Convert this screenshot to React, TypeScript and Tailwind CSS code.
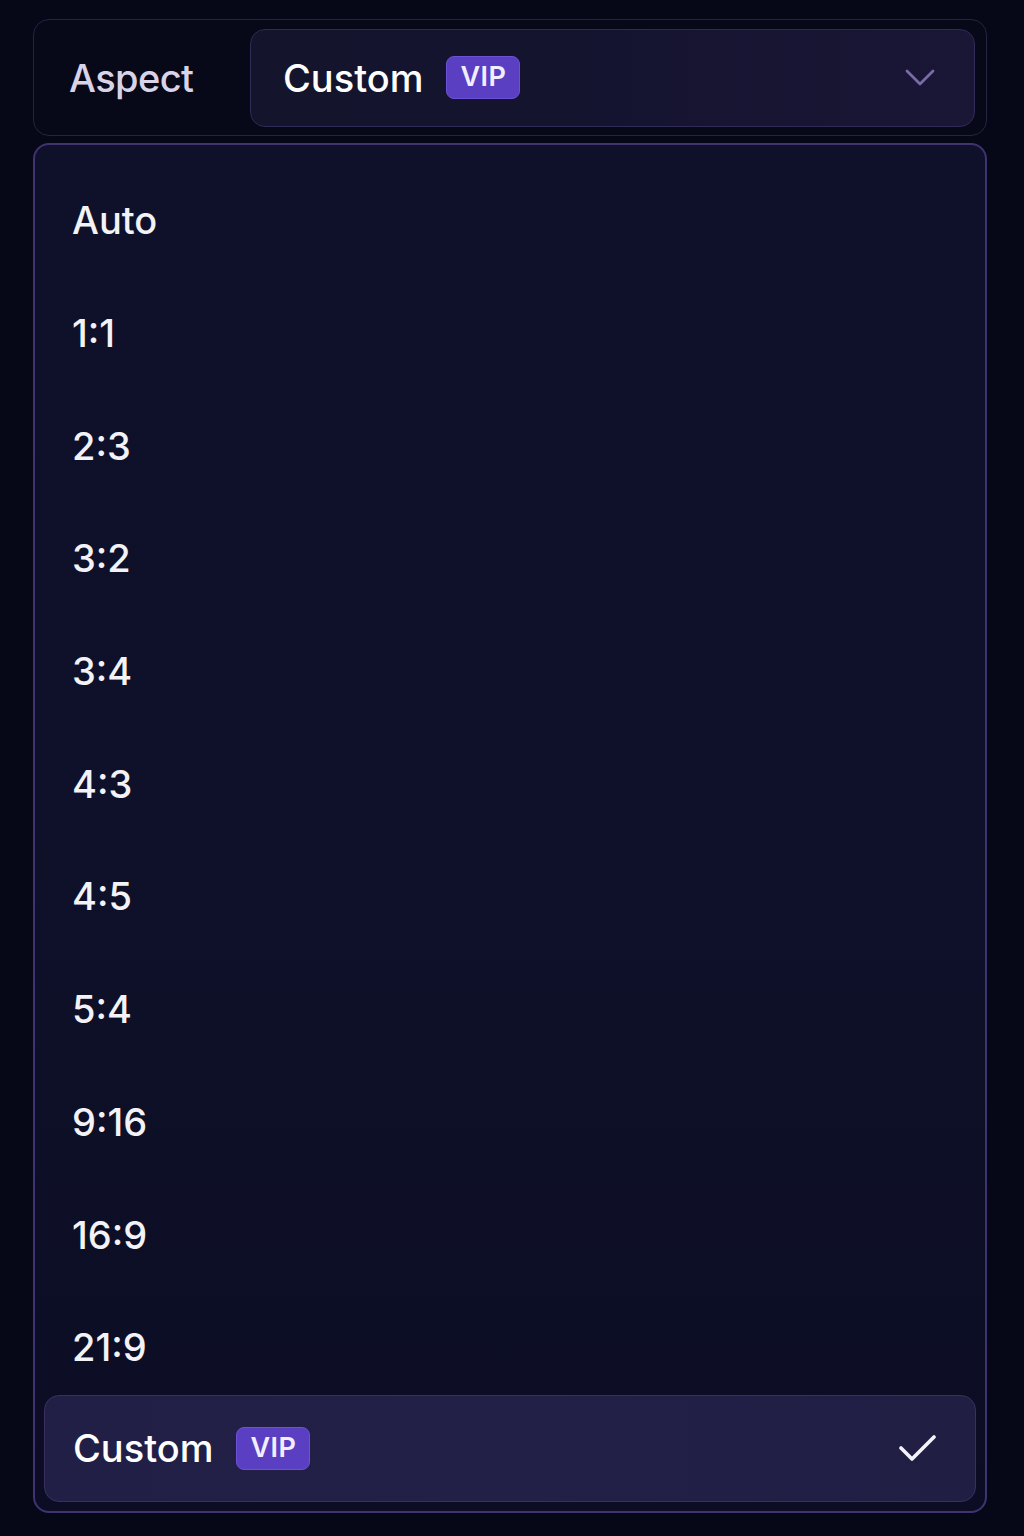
const options = ["Auto", "1:1", "2:3", "3:2", "3:4", "4:3", "4:5", "5:4", "9:16", "16:9", "21:9"];

function VipBadge() {
  return (
    <span className="flex h-[43px] w-[74px] items-center justify-center rounded-[8px] border border-[#6b52d6] bg-[#5a3fc2] text-[27px] font-semibold tracking-[0.5px] text-[#f1eeff]">
      VIP
    </span>
  );
}

export default function App() {
  return (
    <div
      className="min-h-screen w-full bg-[#060717] pl-[33px] pr-[37px] pt-[19px]"
      style={{ fontFamily: "Inter, 'Noto Sans', sans-serif" }}
    >
      {/* header row */}
      <div className="flex h-[117px] items-center rounded-[16px] border-[1.5px] border-[#28233f] bg-[#070818] pr-[11px]">
        <span className="w-[216px] pl-[35px] text-[38px] font-medium leading-none tracking-[-0.6px] text-[#d9d3ea]">Aspect</span>
        <button className="flex h-[98px] flex-1 items-center rounded-[15px] border border-[#302a56] bg-gradient-to-r from-[#14142d] via-[#151430] to-[#1a1636] pl-[32px] pr-[39px]">
          <span className="text-[38px] font-medium leading-none text-white">Custom</span>
          <span className="ml-[23px]">
            <VipBadge />
          </span>
          <svg className="ml-auto" width="30" height="18" viewBox="0 0 30 18" fill="none">
            <path d="M2 2 L15 15 L28 2" stroke="#7a6aa6" strokeWidth="2.8" strokeLinecap="round" strokeLinejoin="round" />
          </svg>
        </button>
      </div>

      {/* dropdown panel */}
      <div className="mt-[7px] flex flex-col rounded-[16px] border-2 border-[#3f3372] bg-gradient-to-b from-[#0f1029] via-[#0e1129] to-[#0c0d24] px-[9px] pb-[9px] pt-[19px]">
        {options.map((o) => (
          <div key={o} className="flex h-[112.7px] items-center pl-[28px] text-[38px] font-medium leading-none text-[#f2f2f7]">
            {o}
          </div>
        ))}
        <div className="mt-[-9px] flex h-[107px] items-center rounded-[15px] border border-[#38315f] bg-gradient-to-r from-[#221f46] via-[#232048] to-[#211e44] pl-[28px] pr-[38px]">
          <span className="text-[38px] font-medium leading-none text-white">Custom</span>
          <span className="ml-[23px]">
            <VipBadge />
          </span>
          <svg className="ml-auto" width="38" height="30" viewBox="0 0 38 30" fill="none">
            <path d="M2 15 L13 26 L35 4" stroke="#f4f2fb" strokeWidth="3.6" strokeLinecap="round" strokeLinejoin="round" />
          </svg>
        </div>
      </div>
    </div>
  );
}
